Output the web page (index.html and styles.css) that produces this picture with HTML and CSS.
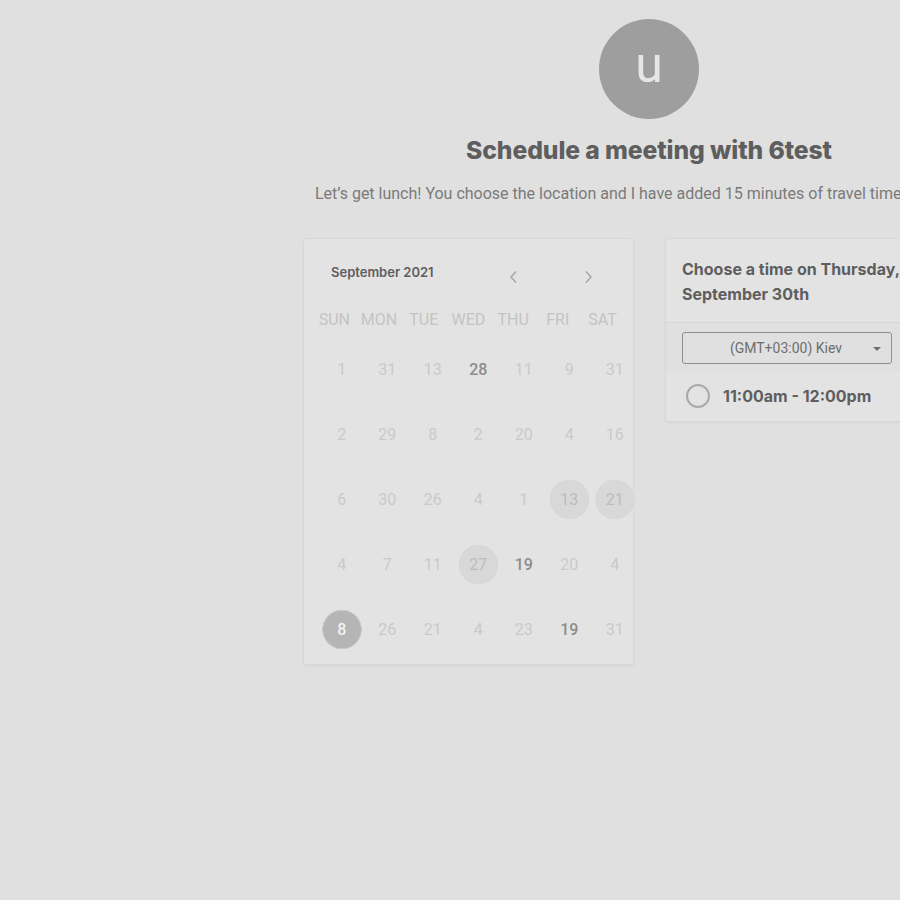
FILE: index.html
```html
<!DOCTYPE html>
<html>
<head>
<meta charset="utf-8">
<link rel="stylesheet" href="styles.css">
</head>
<body>
<div class="page">
  <div class="avatar">u</div>
  <h1 class="title">Schedule a meeting with 6test</h1>
  <p class="subtitle">Let’s get lunch! You choose the location and I have added 15 minutes of travel time.</p>
  <div class="cards">
    <div class="card calendar">
      <div class="cal-head">
        <span class="month">September 2021</span>
        <span class="nav">
          <svg class="chev" width="10" height="14" viewBox="0 0 10 14"><path d="M7 1.5 L2 7 L7 12.5" fill="none" stroke="#a3a3a3" stroke-width="1.4"/></svg>
          <svg class="chev" width="10" height="14" viewBox="0 0 10 14"><path d="M3 1.5 L8 7 L3 12.5" fill="none" stroke="#a3a3a3" stroke-width="1.4"/></svg>
        </span>
      </div>
      <div class="dow">
        <span>SUN</span><span>MON</span><span>TUE</span><span>WED</span><span>THU</span><span>FRI</span><span>SAT</span>
      </div>
      <div class="days">
        <span class="d">1</span><span class="d">31</span><span class="d">13</span><span class="d dark">28</span><span class="d">11</span><span class="d">9</span><span class="d">31</span>
        <span class="d">2</span><span class="d">29</span><span class="d">8</span><span class="d">2</span><span class="d">20</span><span class="d">4</span><span class="d">16</span>
        <span class="d">6</span><span class="d">30</span><span class="d">26</span><span class="d">4</span><span class="d">1</span><span class="d soft">13</span><span class="d soft">21</span>
        <span class="d">4</span><span class="d">7</span><span class="d">11</span><span class="d soft">27</span><span class="d dark">19</span><span class="d">20</span><span class="d">4</span>
        <span class="d sel">8</span><span class="d">26</span><span class="d">21</span><span class="d">4</span><span class="d">23</span><span class="d dark">19</span><span class="d">31</span>
      </div>
    </div>
    <div class="card times">
      <div class="times-head">Choose a time on Thursday, September 30th</div>
      <div class="tz-band">
        <div class="tz">(GMT+03:00) Kiev<span class="caret"></span></div>
      </div>
      <div class="slot">
        <span class="radio"></span>
        <span class="slot-text">11:00am - 12:00pm</span>
      </div>
    </div>
  </div>
</div>
</body>
</html>
```
FILE: styles.css
```css
html, body {
  margin: 0;
  padding: 0;
  background: #e0e0e0;
  overflow: hidden;
  width: 900px;
  height: 900px;
}
.page {
  width: 1298px;
  display: flex;
  flex-direction: column;
  align-items: center;
  padding-top: 19px;
}
.avatar {
  width: 100px;
  height: 100px;
  border-radius: 50%;
  background: #9e9e9e;
  color: #e6e6e6;
  font-family: Roboto, sans-serif;
  font-size: 50px;
  line-height: 92px;
  text-align: center;
}
.title {
  margin: 15px 0 0;
  font-family: Inter, sans-serif;
  font-weight: 800;
  font-size: 24.7px;
  line-height: 32px;
  color: #5e5e5e;
  letter-spacing: -0.1px;
}
.subtitle {
  margin: 18px 0 0;
  width: 668px;
  font-family: Roboto, sans-serif;
  font-size: 16px;
  line-height: 20px;
  color: #7a7a7a;
  white-space: nowrap;
  text-align: left;
}
.cards {
  display: flex;
  gap: 31px;
  margin-top: 34px;
  align-items: flex-start;
}
.card {
  background: #e3e3e3;
  border: 1px solid #d8d8d8;
  border-radius: 3px;
  box-shadow: 0 1px 2px rgba(0,0,0,0.05);
  box-sizing: border-box;
}
.calendar {
  width: 331px;
  height: 427px;
}
.cal-head {
  display: flex;
  align-items: center;
  padding: 22px 0 0 27px;
  height: 22px;
}
.month {
  font-family: Inter, sans-serif;
  font-weight: 600;
  font-size: 13px;
  color: #5e5e5e;
  width: 178px;
}
.nav {
  display: flex;
  gap: 64px;
  margin-top: 9px;
}
.chev { display: block; }
.dow {
  display: grid;
  grid-template-columns: repeat(7, 44.7px);
  padding-left: 8px;
  margin-top: 27px;
  font-family: Roboto, sans-serif;
  font-size: 16px;
  color: #c4c4c4;
  text-align: center;
  line-height: 20px;
}
.days {
  display: grid;
  grid-template-columns: repeat(7, 45.5px);
  grid-auto-rows: 65px;
  padding-left: 15px;
  margin-top: 7px;
  width: 330px;
}
.d {
  display: flex;
  align-items: center;
  justify-content: center;
  font-family: Roboto, sans-serif;
  font-size: 16px;
  color: #cacaca;
}
.d.dark {
  color: #8c8c8c;
  font-weight: 500;
}
.d.soft {
  background: radial-gradient(circle at center, #d8d8d8 0 19.5px, transparent 20px);
  color: #bcbcbc;
}
.d.sel {
  background: radial-gradient(circle at center, #b5b5b5 0 18.5px, #c8c8c8 19px 19.5px, transparent 20px);
  color: #f2f2f2;
  font-weight: 500;
}
.times {
  width: 330px;
}
.times-head {
  padding: 18px 17px 15px 16px;
  font-family: Inter, sans-serif;
  font-weight: 700;
  font-size: 16px;
  line-height: 25px;
  color: #5e5e5e;
  border-bottom: 1px solid #d6d6d6;
}
.tz-band {
  background: #e0e0e0;
  padding: 9px 17px 8px 16px;
}
.tz {
  position: relative;
  width: 210px;
  height: 32px;
  box-sizing: border-box;
  border: 1px solid #8e8e8e;
  border-radius: 3px;
  font-family: Roboto, sans-serif;
  font-size: 14px;
  color: #6e6e6e;
  line-height: 30px;
  text-align: center;
  padding-right: 2px;
}
.caret {
  position: absolute;
  right: 10px;
  top: 14px;
  width: 0;
  height: 0;
  border-left: 4px solid transparent;
  border-right: 4px solid transparent;
  border-top: 4px solid #6e6e6e;
}
.slot {
  display: flex;
  align-items: center;
  gap: 13px;
  padding: 12px 20px 13px;
  height: 24px;
}
.radio {
  width: 24px;
  height: 24px;
  box-sizing: border-box;
  border: 2px solid #a9a9a9;
  border-radius: 50%;
}
.slot-text {
  font-family: Inter, sans-serif;
  font-weight: 700;
  font-size: 16px;
  color: #5e5e5e;
}
```
